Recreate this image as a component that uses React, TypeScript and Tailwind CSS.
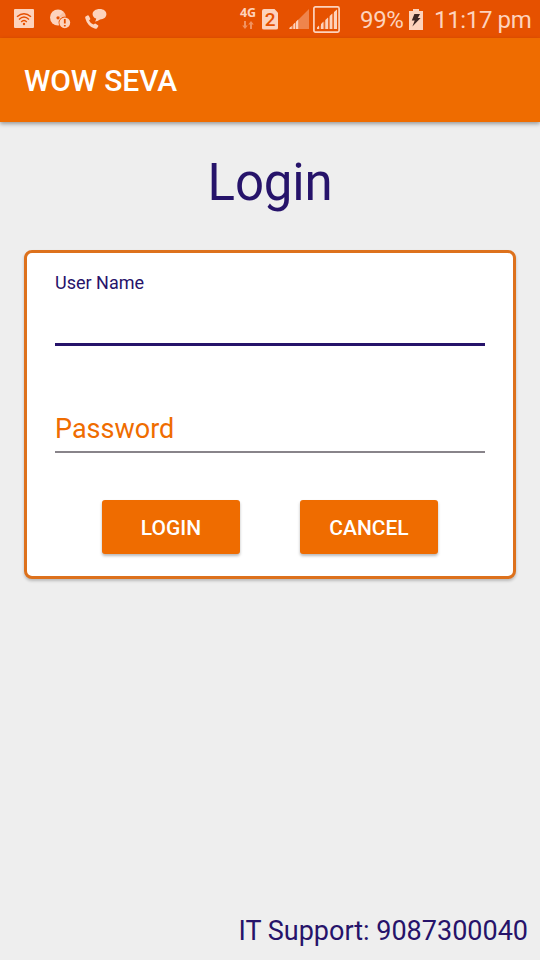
import type { ReactNode } from "react";

const ICON = "#fdd3bd";

function WifiIcon() {
  return (
    <svg width="20" height="20" viewBox="0 0 20 20" fill="none">
      <rect x="0" y="0" width="20" height="19" rx="1" fill={ICON} />
      <g stroke="#e65100" strokeWidth="1.4">
        <path d="M3 7.8Q10 1.6 17 7.8" />
        <path d="M5 10.5Q10 5.7 15 10.5" />
        <path d="M7.2 12.9Q10 10 12.8 12.9" />
      </g>
      <circle cx="10" cy="15" r="1.2" fill="#e65100" />
    </svg>
  );
}

function DiscAlertIcon() {
  return (
    <svg width="21" height="20" viewBox="0 0 21 20">
      <circle cx="8" cy="8.5" r="8" fill={ICON} />
      <path d="M8 8.5 13.6 2.8 16 7Z" fill="#e65100" opacity="0.15" />
      <circle cx="8" cy="8.8" r="1.6" fill="#e65100" />
      <circle cx="14.8" cy="13.8" r="6.2" fill="#e65100" />
      <circle cx="14.8" cy="13.8" r="5.4" fill={ICON} />
      <path d="M14.8 10V14.6M14.8 15.9V17.6" stroke="#e65100" strokeWidth="1.8" />
    </svg>
  );
}

function CallMessageIcon() {
  return (
    <svg width="22" height="21" viewBox="0 0 22 21" fill={ICON}>
      <path d="M0.6 7.6 2.4 6.4Q3.3 6 3.8 6.8L5.2 9.4Q5.5 10.2 4.8 10.8L4 11.4Q5.4 14.2 8.4 15.6L9.3 14.9Q10 14.4 10.7 14.8L13 16.2Q13.7 16.7 13.2 17.5L12 19.2Q11.3 20 9.6 19.6 2.4 17.2 0.2 9 0.1 8 0.6 7.6Z" />
      <path d="M14.6 0C18.8 0 21.4 2.2 21.4 5.2 21.4 8.2 18.6 10.3 15 10.4Q12.6 12.2 9.8 12.6 11.2 11.4 11.2 9.6C8.8 8.8 7.6 7 7.6 5.2 7.6 2.2 10.6 0 14.6 0Z" />
    </svg>
  );
}

function DataArrowsIcon() {
  return (
    <svg width="12" height="8" viewBox="0 0 12 8" fill={ICON} opacity="0.5">
      <path d="M2 0H4V4.5H5.8L3 8 0.2 4.5H2Z" />
      <path d="M8 8H10V3.5H11.8L9 0 6.2 3.5H8Z" />
    </svg>
  );
}

function SignalIcon() {
  return (
    <svg width="21" height="20" viewBox="0 0 21 20" fill={ICON}>
      <path d="M0 20 20 0V20Z" opacity="0.4" />
      <path d="M0.5 20V18.7L2.7 17V20ZM4.4 20V15.3L6 13.7V20ZM7 20V12.7L9.2 10.5V20Z" />
    </svg>
  );
}

function BoxedSignalIcon() {
  return (
    <svg width="27" height="27" viewBox="0 0 27 27" fill={ICON}>
      <rect x="0.9" y="0.9" width="25.2" height="25.2" rx="1.5" fill="none" stroke={ICON} strokeWidth="1.7" />
      <path d="M4 23 24 3.5V23Z" opacity="0.2" />
      <path d="M4 23V21.5L6 19.5V23ZM8 23V18L10.5 15.5V23ZM12.3 23V14L15 11.5V23ZM16.7 23V10L19.3 7.5V23ZM21 23V6L24 3.5V23Z" />
    </svg>
  );
}

function BatteryIcon() {
  return (
    <svg width="14" height="21" viewBox="0 0 14 21">
      <path d="M4 0H10V2H14V21H0V2H4Z" fill={ICON} />
      <path d="M5.4 5H11L8.8 9H11.6L3.4 17.6 5.7 11.4H2.8Z" fill="#3e2723" />
    </svg>
  );
}

function StatusBar() {
  return (
    <div className="flex h-[38px] items-center bg-[#e65100] pl-[14px] text-2xl tracking-[-0.35px] text-[#fdd3bd]">
      <WifiIcon />
      <div className="ml-4">
        <DiscAlertIcon />
      </div>
      <div className="ml-[14px]">
        <CallMessageIcon />
      </div>
      <div className="ml-[132px] flex w-[18px] flex-col items-center gap-px pb-[3px]">
        <span className="font-['Open_Sans',sans-serif] text-[12.5px] leading-[14px] font-bold tracking-normal">4G</span>
        <DataArrowsIcon />
      </div>
      <div className="ml-[5px] flex h-[21px] w-4 items-center justify-center rounded-[2px] bg-[#fdd3bd] pt-px text-[19px] leading-none font-medium text-[#e65100] [clip-path:polygon(0_0,75%_0,100%_20%,100%_100%,0_100%)]">
        2
      </div>
      <div className="ml-[11px]">
        <SignalIcon />
      </div>
      <div className="ml-[3px]">
        <BoxedSignalIcon />
      </div>
      <span className="ml-5 w-[43px] pt-0.5 whitespace-nowrap">99%</span>
      <div className="ml-[6px]">
        <BatteryIcon />
      </div>
      <span className="ml-[11px] pt-0.5 whitespace-nowrap">11:17 pm</span>
    </div>
  );
}

function ActionButton({ children }: { children: ReactNode }) {
  return (
    <button className="h-[54px] w-[138px] rounded-[3px] bg-[#ef6c00] pt-[3px] text-[21px] font-medium text-white shadow-[0_2px_3px_rgba(0,0,0,0.28)]">
      {children}
    </button>
  );
}

export default function App() {
  return (
    <div className="flex h-[960px] w-[540px] flex-col overflow-hidden bg-[#eeeeee] font-[Roboto,sans-serif]">
      <StatusBar />

      {/* App bar */}
      <header className="flex h-[84px] shrink-0 items-center bg-[#ef6c00] pl-6 shadow-[0_2px_4px_rgba(0,0,0,0.35)]">
        <h1 className="text-[30px] font-medium tracking-[-0.15px] text-white">WOW SEVA</h1>
      </header>

      <main className="flex flex-1 flex-col px-6">
        <h2 className="mt-[31px] text-center text-[51px] leading-[60px] tracking-[-0.2px] text-[#26136a]">Login</h2>

        {/* Login card */}
        <form className="mt-[37px] h-[329px] rounded-lg border-3 border-[#dd711c] bg-white px-7 shadow-[0_2px_3px_rgba(0,0,0,0.22)]">
          <div className="flex h-[93px] flex-col border-b-3 border-[#26136a] pt-[19px]">
            <label className="text-[18px] leading-[22px] text-[#26136a]">User Name</label>
          </div>
          <div className="flex h-[107px] flex-col justify-end border-b-2 border-[#88848a] pb-[6px]">
            <label className="text-[27px] leading-8 text-[#ef6c00]">Password</label>
          </div>
          <div className="mt-[47px] flex justify-center gap-[60px]">
            <ActionButton>LOGIN</ActionButton>
            <ActionButton>CANCEL</ActionButton>
          </div>
        </form>
      </main>

      <footer className="pr-3 pb-[13px] text-right text-[27px] leading-8 text-[#26136a]">
        IT Support: 9087300040
      </footer>
    </div>
  );
}
